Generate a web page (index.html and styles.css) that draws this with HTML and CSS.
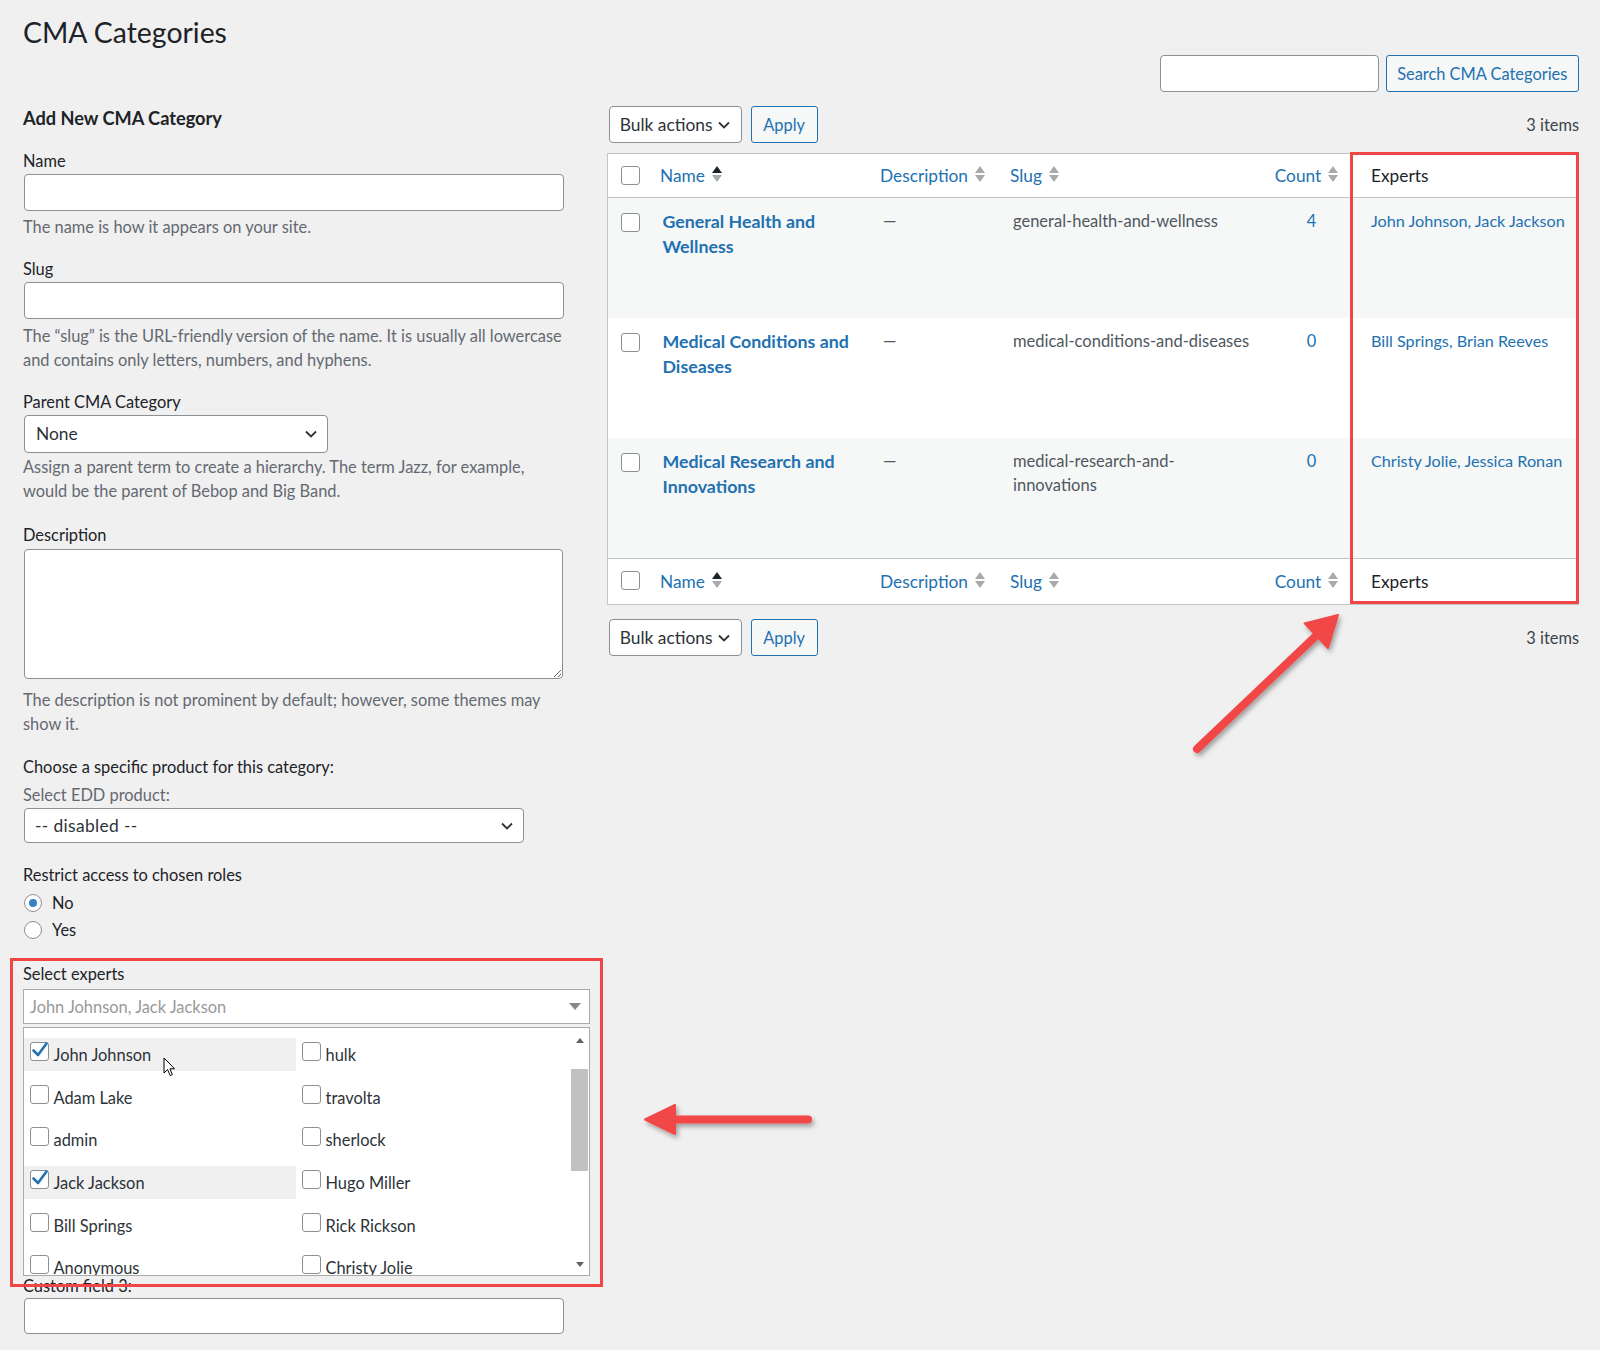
FILE: index.html
```html
<!DOCTYPE html>
<html lang="en">
<head>
<meta charset="utf-8">
<title>CMA Categories</title>
<link rel="stylesheet" href="styles.css">
</head>
<body>
<div class="page">
  <div class="col-left">
    <h1 class="page-title">CMA Categories</h1>
    <h2 class="form-title">Add New CMA Category</h2>

    <label class="field-label gap-19">Name</label>
    <input class="text-input" type="text">
    <p class="help gap-4">The name is how it appears on your site.</p>

    <label class="field-label gap-18">Slug</label>
    <input class="text-input" type="text">
    <p class="help gap-5">The “slug” is the URL-friendly version of the name. It is usually all lowercase<br>and contains only letters, numbers, and hyphens.</p>

    <label class="field-label gap-18">Parent CMA Category</label>
    <div class="select select-parent"><span>None</span><svg class="chev" width="12" height="8" viewBox="0 0 12 8"><path d="M1 1.5 L6 6.5 L11 1.5" fill="none" stroke="#2c3338" stroke-width="1.8"/></svg></div>
    <p class="help gap-2">Assign a parent term to create a hierarchy. The term Jazz, for example,<br>would be the parent of Bebop and Big Band.</p>

    <label class="field-label gap-20">Description</label>
    <textarea class="textarea"></textarea>
    <p class="help gap-9">The description is not prominent by default; however, some themes may<br>show it.</p>

    <p class="plain gap-19">Choose a specific product for this category:</p>
    <p class="sub-label gap-4">Select EDD product:</p>
    <div class="select select-edd"><span>-- disabled --</span><svg class="chev" width="12" height="8" viewBox="0 0 12 8"><path d="M1 1.5 L6 6.5 L11 1.5" fill="none" stroke="#2c3338" stroke-width="1.8"/></svg></div>

    <p class="plain gap-20">Restrict access to chosen roles</p>
    <div class="radio-row gap-2"><span class="radio is-checked"></span><span>No</span></div>
    <div class="radio-row"><span class="radio"></span><span>Yes</span></div>

    <p class="plain gap-19">Select experts</p>
    <div class="multi-select"><span>John Johnson, Jack Jackson</span><span class="tri-down"></span></div>
    <div class="expert-list">
      <div class="expert-grid">
        <div class="expert is-checked"><span class="cb"><svg class="check" width="20" height="20" viewBox="0 0 20 20"><path d="M3.5 9.5 L8 14 L16.5 2.5" fill="none" stroke="#2271b1" stroke-width="2.6" stroke-linecap="round" stroke-linejoin="round"/></svg></span><span>John Johnson</span></div>
        <div class="expert"><span class="cb"></span><span>hulk</span></div>
        <div class="expert"><span class="cb"></span><span>Adam Lake</span></div>
        <div class="expert"><span class="cb"></span><span>travolta</span></div>
        <div class="expert"><span class="cb"></span><span>admin</span></div>
        <div class="expert"><span class="cb"></span><span>sherlock</span></div>
        <div class="expert is-checked"><span class="cb"><svg class="check" width="20" height="20" viewBox="0 0 20 20"><path d="M3.5 9.5 L8 14 L16.5 2.5" fill="none" stroke="#2271b1" stroke-width="2.6" stroke-linecap="round" stroke-linejoin="round"/></svg></span><span>Jack Jackson</span></div>
        <div class="expert"><span class="cb"></span><span>Hugo Miller</span></div>
        <div class="expert"><span class="cb"></span><span>Bill Springs</span></div>
        <div class="expert"><span class="cb"></span><span>Rick Rickson</span></div>
        <div class="expert"><span class="cb"></span><span>Anonymous</span></div>
        <div class="expert"><span class="cb"></span><span>Christy Jolie</span></div>
      </div>
      <div class="scrollbar">
        <div class="sb-btn sb-up"><span class="sb-tri-up"></span></div>
        <div class="sb-thumb"></div>
        <div class="sb-space"></div>
        <div class="sb-btn sb-down"><span class="sb-tri-down"></span></div>
      </div>
    </div>
    <label class="field-label custom-label">Custom field 3:</label>
    <input class="text-input custom-input" type="text">
  </div>

  <div class="col-right">
    <div class="search-box">
      <input class="search-input" type="search">
      <button class="btn btn-search">Search CMA Categories</button>
    </div>

    <div class="tablenav">
      <div class="select select-bulk"><span>Bulk actions</span><svg class="chev" width="12" height="8" viewBox="0 0 12 8"><path d="M1 1.5 L6 6.5 L11 1.5" fill="none" stroke="#2c3338" stroke-width="1.8"/></svg></div>
      <button class="btn btn-apply">Apply</button>
      <span class="items">3 items</span>
    </div>

    <table class="list-table">
      <colgroup>
        <col class="c-cb"><col class="c-name"><col class="c-desc"><col class="c-slug"><col class="c-count"><col class="c-exp">
      </colgroup>
      <thead>
        <tr>
          <th class="cb-cell"><span class="cb"></span></th>
          <th><span class="sort">Name<span class="sort-ind"><i class="up on"></i><i class="down"></i></span></span></th>
          <th><span class="sort">Description<span class="sort-ind"><i class="up"></i><i class="down"></i></span></span></th>
          <th><span class="sort">Slug<span class="sort-ind"><i class="up"></i><i class="down"></i></span></span></th>
          <th class="num"><span class="sort">Count<span class="sort-ind"><i class="up"></i><i class="down"></i></span></span></th>
          <th class="exp">Experts</th>
        </tr>
      </thead>
      <tbody>
        <tr class="alt">
          <td class="cb-cell"><span class="cb"></span></td>
          <td class="name"><a>General Health and<br>Wellness</a></td>
          <td class="desc">—</td>
          <td class="slug">general-health-and-wellness</td>
          <td class="num"><a>4</a></td>
          <td class="exp"><a>John Johnson, Jack Jackson</a></td>
        </tr>
        <tr>
          <td class="cb-cell"><span class="cb"></span></td>
          <td class="name"><a>Medical Conditions and<br>Diseases</a></td>
          <td class="desc">—</td>
          <td class="slug">medical-conditions-and-diseases</td>
          <td class="num"><a>0</a></td>
          <td class="exp"><a>Bill Springs, Brian Reeves</a></td>
        </tr>
        <tr class="alt">
          <td class="cb-cell"><span class="cb"></span></td>
          <td class="name"><a>Medical Research and<br>Innovations</a></td>
          <td class="desc">—</td>
          <td class="slug">medical-research-and-<br>innovations</td>
          <td class="num"><a>0</a></td>
          <td class="exp"><a>Christy Jolie, Jessica Ronan</a></td>
        </tr>
      </tbody>
      <tfoot>
        <tr>
          <th class="cb-cell"><span class="cb"></span></th>
          <th><span class="sort">Name<span class="sort-ind"><i class="up on"></i><i class="down"></i></span></span></th>
          <th><span class="sort">Description<span class="sort-ind"><i class="up"></i><i class="down"></i></span></span></th>
          <th><span class="sort">Slug<span class="sort-ind"><i class="up"></i><i class="down"></i></span></span></th>
          <th class="num"><span class="sort">Count<span class="sort-ind"><i class="up"></i><i class="down"></i></span></span></th>
          <th class="exp">Experts</th>
        </tr>
      </tfoot>
    </table>

    <div class="tablenav tablenav-bottom">
      <div class="select select-bulk"><span>Bulk actions</span><svg class="chev" width="12" height="8" viewBox="0 0 12 8"><path d="M1 1.5 L6 6.5 L11 1.5" fill="none" stroke="#2c3338" stroke-width="1.8"/></svg></div>
      <button class="btn btn-apply">Apply</button>
      <span class="items">3 items</span>
    </div>
  </div>
</div>

<div class="mark mark-table"></div>
<div class="mark mark-experts"></div>

<svg class="annotations" width="1600" height="1350" viewBox="0 0 1600 1350">
  <defs>
    <filter id="shadow" x="-30%" y="-30%" width="160%" height="160%">
      <feDropShadow dx="2" dy="3" stdDeviation="2.5" flood-color="#000" flood-opacity="0.35"/>
    </filter>
  </defs>
  <g filter="url(#shadow)">
    <line x1="1197" y1="749" x2="1318" y2="634" stroke="#f24646" stroke-width="8" stroke-linecap="round"/>
    <polygon points="1338,615 1328,648 1304.6,623.4" fill="#f24646" stroke="#f24646" stroke-width="2" stroke-linejoin="round"/>
  </g>
  <g filter="url(#shadow)">
    <line x1="808" y1="1119.5" x2="668" y2="1119.5" stroke="#f24646" stroke-width="8" stroke-linecap="round"/>
    <polygon points="645,1119.5 675,1105 675,1134" fill="#f24646" stroke="#f24646" stroke-width="2" stroke-linejoin="round"/>
  </g>
</svg>

<svg class="cursor" width="13" height="20" viewBox="0 0 13 20"><path d="M1 1 V16 L4.6 12.6 L7.2 18.6 L9.4 17.6 L6.9 11.8 H11.6 Z" fill="#fff" stroke="#000" stroke-width="1" stroke-linejoin="round"/></svg>
</body>
</html>
```

FILE: styles.css
```css
* { box-sizing: border-box; }

html, body { margin: 0; padding: 0; }

body {
  position: relative;
  width: 1600px;
  height: 1350px;
  overflow: hidden;
  background: #f0f0f1;
  font-family: Lato, "Open Sans", sans-serif;
  font-size: 16.4px;
  line-height: 24px;
  color: #3c434a;
}

.page {
  display: flex;
  padding: 0 21px 0 23px;
}

/* ---------- left column ---------- */
.col-left { width: 567px; flex: none; }

.page-title {
  margin: 0;
  padding-top: 14px;
  font-size: 28.4px;
  line-height: 36px;
  font-weight: 400;
  color: #1d2327;
}

.form-title {
  margin: 56px 0 0;
  font-size: 18.2px;
  line-height: 24px;
  font-weight: 700;
  color: #1d2327;
}

.field-label { display: block; color: #1d2327; }

.gap-2 { margin-top: 2px; }
.gap-4 { margin-top: 4px; }
.gap-5 { margin-top: 5px; }
.gap-9 { margin-top: 9px; }
.gap-18 { margin-top: 18px; }
.gap-19 { margin-top: 19px; }
.gap-20 { margin-top: 20px; }

.text-input {
  display: block;
  width: 540px;
  height: 37px;
  margin: 1px 0 0 1px;
  padding: 0 8px;
  border: 1px solid #8c8f94;
  border-radius: 4px;
  background: #fff;
  font: inherit;
  outline: none;
}

.help {
  margin-bottom: 0;
  color: #646970;
  white-space: nowrap;
}

.plain { margin-bottom: 0; color: #1d2327; }
.sub-label { margin-bottom: 0; color: #646970; }

.select {
  display: flex;
  align-items: center;
  justify-content: space-between;
  border: 1px solid #8c8f94;
  border-radius: 4px;
  background: #fff;
  font-size: 17.4px;
  color: #2c3338;
}
.select-parent {
  width: 304px;
  height: 38px;
  margin: 1px 0 0 1px;
  padding: 0 10px 0 11px;
}
.select-edd {
  width: 500px;
  height: 35px;
  margin: 1px 0 0 1px;
  padding: 0 10px 0 10px;
}
.select-edd span { letter-spacing: 0.35px; }
.chev { flex: none; }

.textarea {
  display: block;
  width: 539px;
  height: 130px;
  margin: 2px 0 0 1px;
  border: 1px solid #8c8f94;
  border-radius: 4px;
  background: #fff;
  font: inherit;
  outline: none;
}

.radio-row {
  display: flex;
  align-items: center;
  gap: 10px;
  height: 27px;
  color: #1d2327;
}
.radio {
  width: 18px;
  height: 18px;
  margin-left: 1px;
  border: 1px solid #8c8f94;
  border-radius: 50%;
  background: #fff;
  display: flex;
  align-items: center;
  justify-content: center;
}
.radio.is-checked::after {
  content: "";
  width: 8px;
  height: 8px;
  border-radius: 50%;
  background: #3582c4;
}

.multi-select {
  display: flex;
  align-items: center;
  justify-content: space-between;
  width: 567px;
  height: 35px;
  margin-top: 3px;
  padding: 0 8px 0 6px;
  border: 1px solid #aaa;
  background: #fff;
  color: #999;
}
.tri-down {
  width: 0;
  height: 0;
  border-left: 6px solid transparent;
  border-right: 6px solid transparent;
  border-top: 7px solid #888;
}

.expert-list {
  display: flex;
  width: 567px;
  height: 249px;
  margin-top: 3px;
  border: 1px solid #aaa;
  background: #fff;
  overflow: hidden;
}
.expert-grid {
  width: 547px;
  flex: none;
  display: grid;
  grid-template-columns: 272px 272px;
  grid-auto-rows: 33px;
  row-gap: 9.7px;
  padding-top: 10px;
}
.expert {
  display: flex;
  align-items: flex-start;
  gap: 5px;
  padding: 4px 0 0 5.5px;
  color: #2c3338;
}
.expert > span:last-child { margin-top: 1px; }
.expert.is-checked { background: #f0f0f0; }

.cb {
  position: relative;
  display: inline-block;
  flex: none;
  width: 19px;
  height: 19px;
  border: 1px solid #8c8f94;
  border-radius: 3px;
  background: #fff;
}
.check { position: absolute; left: -1px; top: -2px; }

.scrollbar {
  width: 17px;
  flex: none;
  display: flex;
  flex-direction: column;
  background: #fff;
}
.sb-btn { display: flex; align-items: center; justify-content: center; }
.sb-up { height: 24px; }
.sb-down { height: 22px; }
.sb-thumb { margin-top: 17px; height: 102px; background: #c1c1c1; }
.sb-space { flex: 1; }
.sb-tri-up, .sb-tri-down {
  width: 0;
  height: 0;
  border-left: 4.5px solid transparent;
  border-right: 4.5px solid transparent;
}
.sb-tri-up { border-bottom: 5px solid #606060; }
.sb-tri-down { border-top: 5px solid #606060; }

.custom-label { margin-top: -2px; }
.custom-input { height: 36px; margin-top: 0; }

/* ---------- right column ---------- */
.col-right {
  width: 972px;
  flex: none;
  margin-left: 17px;
  padding-top: 55px;
}

.search-box {
  display: flex;
  justify-content: flex-end;
  gap: 6.5px;
  height: 37px;
}
.search-input {
  width: 219px;
  height: 37px;
  border: 1px solid #8c8f94;
  border-radius: 4px;
  background: #fff;
  outline: none;
  font: inherit;
}

.btn {
  height: 37px;
  border: 1px solid #2271b1;
  border-radius: 3px;
  background: #f6f7f7;
  color: #2271b1;
  font-family: inherit;
  font-size: 16.4px;
  padding: 0;
}
.btn-search { width: 193.5px; }
.btn-apply { width: 67px; margin-left: 9px; }

.tablenav {
  display: flex;
  align-items: center;
  height: 37px;
  margin-top: 14px;
  padding-left: 1.7px;
}
.tablenav-bottom { margin-top: 14px; }
.select-bulk {
  width: 133px;
  height: 37px;
  padding: 0 11px 0 10px;
}
.items { margin-left: auto; color: #3c434a; }

.list-table {
  width: 972px;
  margin-top: 10px;
  table-layout: fixed;
  border: 1px solid #c3c4c7;
  border-spacing: 0;
  background: #fff;
}
.c-cb { width: 42px; }
.c-name { width: 220px; }
.c-desc { width: 130px; }
.c-slug { width: 265px; }
.c-count { width: 85px; }
.c-exp { width: 228px; }

.list-table th {
  text-align: left;
  font-weight: 400;
  font-size: 17.3px;
  padding: 10px 10px 9px;
  line-height: 24px;
  vertical-align: top;
  color: #2271b1;
}
.list-table thead th { border-bottom: 1px solid #c3c4c7; }
.list-table tfoot th { border-top: 1px solid #c3c4c7; padding-top: 11px; padding-bottom: 10px; }
.list-table th.cb-cell { padding: 12px 0 0 13px; }
.list-table tfoot th.cb-cell { padding: 12px 0 0 13px; }
.list-table th.num { text-align: center; padding-left: 8px; }
.list-table th.exp { padding-left: 21px; color: #1d2327; }

.sort { display: inline-flex; align-items: center; }
.sort-ind {
  display: inline-flex;
  flex-direction: column;
  gap: 2px;
  margin-left: 7px;
  margin-top: -4px;
}
.sort-ind i {
  display: block;
  width: 0;
  height: 0;
  border-left: 5px solid transparent;
  border-right: 5px solid transparent;
}
.sort-ind .up { border-bottom: 7px solid #a7aaad; }
.sort-ind .up.on { border-bottom-color: #1d2327; }
.sort-ind .down { border-top: 7px solid #a7aaad; }

.list-table tbody tr { height: 120px; }
.list-table tbody tr.alt { background: #f6f7f7; }
.list-table td {
  padding: 11px 10px 10px 12.5px;
  vertical-align: top;
  color: #50575e;
}
.list-table td.cb-cell { padding: 15px 0 0 13px; }
.list-table td.name a {
  font-size: 17.8px;
  font-weight: 700;
  color: #2271b1;
}
.list-table td.desc { padding-left: 13px; font-size: 17px; }
.list-table td.slug { padding-left: 13px; font-size: 16.5px; }
.list-table td.num { text-align: center; padding-left: 18px; padding-right: 10px; }
.list-table td a { color: #2271b1; }
.list-table td.exp { padding-left: 21px; font-size: 16.2px; }

/* ---------- annotations ---------- */
.mark {
  position: absolute;
  border: 3px solid #f24646;
  pointer-events: none;
}
.mark-table { left: 1350px; top: 152px; width: 229px; height: 452px; }
.mark-experts { left: 9.5px; top: 958px; width: 593.5px; height: 329px; }

.annotations {
  position: absolute;
  left: 0;
  top: 0;
  pointer-events: none;
}

.cursor {
  position: absolute;
  left: 163px;
  top: 1057px;
  pointer-events: none;
}
```
